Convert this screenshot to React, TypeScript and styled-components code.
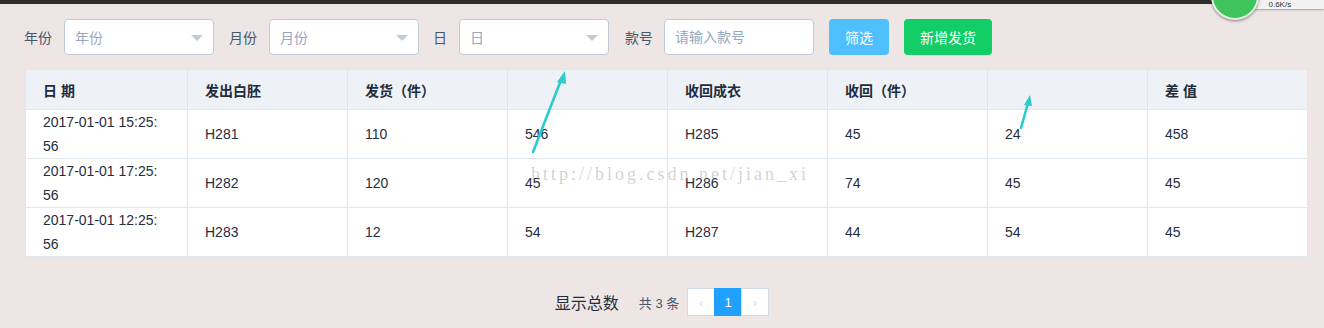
import React from 'react';
import styled, { createGlobalStyle } from 'styled-components';

const GlobalStyle = createGlobalStyle`
  html, body {
    margin: 0;
    padding: 0;
    background: #ede6e4;
    font-family: 'Liberation Sans', 'Noto Sans CJK SC', sans-serif;
    font-size: 14px;
    color: #1f2d3d;
  }
`;

const Page = styled.div`
  position: relative;
  width: 1324px;
  height: 328px;
  overflow: hidden;
  background: #ede6e4;
`;

const TopBar = styled.div`
  height: 4px;
  background: #2d2d2d;
`;

const FilterBar = styled.div`
  display: flex;
  align-items: center;
  padding: 15px 0 0 24px;
  height: 36px;
`;

const Field = styled.div<{ $after?: number }>`
  display: flex;
  align-items: center;
  margin-right: ${(p) => p.$after ?? 15}px;
`;

const Label = styled.span<{ $gap?: number }>`
  color: #48576a;
  margin-right: ${(p) => p.$gap ?? 12}px;
  white-space: nowrap;
`;

const SelectBox = styled.div`
  position: relative;
  box-sizing: border-box;
  width: 150px;
  height: 36px;
  border: 1px solid #bfcbd9;
  border-radius: 4px;
  background: #fff;
  display: flex;
  align-items: center;
  padding-left: 10px;
  color: #97a8be;
`;

const Caret = styled.span`
  position: absolute;
  right: 10px;
  top: 15px;
  width: 0;
  height: 0;
  border-left: 6px solid transparent;
  border-right: 6px solid transparent;
  border-top: 6px solid #bfcbd9;
`;

const TextInput = styled.input`
  box-sizing: border-box;
  width: 150px;
  height: 36px;
  border: 1px solid #bfcbd9;
  border-radius: 4px;
  background: #fff;
  padding: 0 10px;
  font: inherit;
  outline: none;
  &::placeholder {
    color: #97a8be;
  }
`;

const Button = styled.button<{ $color: string; $width: number }>`
  width: ${(p) => p.$width}px;
  height: 36px;
  border: none;
  border-radius: 4px;
  background: ${(p) => p.$color};
  color: #fff;
  font: inherit;
  padding: 0;
  margin-right: 15px;
`;

const TableWrap = styled.div`
  margin: 14px 16px 0 25px;
  border: 1px solid #dfe6ec;
  border-right: none;
  border-bottom: none;
  background: #fff;
`;

const Grid = styled.div`
  display: grid;
  grid-template-columns: 162px repeat(7, 160px);
`;

const HeadCell = styled.div`
  height: 39px;
  background: #eef1f6;
  border-right: 1px solid #dfe6ec;
  border-bottom: 1px solid #dfe6ec;
  padding-left: 17px;
  display: flex;
  align-items: center;
  font-weight: bold;
  color: #1f2d3d;
`;

const Cell = styled.div`
  height: 48px;
  border-right: 1px solid #dfe6ec;
  border-bottom: 1px solid #dfe6ec;
  padding-left: 17px;
  display: flex;
  align-items: center;
  line-height: 24px;
  color: #1f2d3d;
`;

const Footer = styled.div`
  display: flex;
  justify-content: center;
  align-items: center;
  margin-top: 31px;
  height: 28px;
`;

const TotalTitle = styled.span`
  font-size: 16px;
  color: #1f2d3d;
  margin-right: 20px;
`;

const TotalCount = styled.span`
  font-size: 13px;
  color: #48576a;
  margin-right: 9px;
`;

const PageBtn = styled.div<{ $active?: boolean }>`
  box-sizing: border-box;
  width: 28px;
  height: 28px;
  display: flex;
  align-items: center;
  justify-content: center;
  border: 1px solid ${(p) => (p.$active ? '#20a0ff' : '#d1dbe5')};
  margin-left: -1px;
  background: ${(p) => (p.$active ? '#20a0ff' : '#fff')};
  color: ${(p) => (p.$active ? '#fff' : '#d1dbe5')};
  font-size: 13px;
`;

const Overlay = styled.svg`
  position: absolute;
  left: 0;
  top: 0;
  pointer-events: none;
`;

const Watermark = styled.div`
  position: absolute;
  left: 531px;
  top: 164px;
  font-family: 'Liberation Serif', serif;
  font-size: 18px;
  letter-spacing: 3px;
  color: rgba(140, 140, 140, 0.4);
  white-space: nowrap;
`;

const TrayPanel = styled.div`
  position: absolute;
  right: 0;
  top: -6px;
  width: 78px;
  height: 15px;
  background: #f2f2f2;
  border-radius: 0 0 0 6px;
  box-shadow: 0 1px 2px rgba(0, 0, 0, 0.3);
  display: flex;
  align-items: flex-end;
  padding-left: 8px;
  box-sizing: border-box;
  font-size: 8px;
  color: #333;
  gap: 10px;
`;

const TrayArrow = styled.span`
  color: #3ec45a;
  font-size: 9px;
`;

const TrayBall = styled.div`
  position: absolute;
  left: 1211px;
  top: -28px;
  width: 44px;
  height: 44px;
  border-radius: 50%;
  background: #3ec45a;
  border: 2px solid #e8f0e8;
  box-shadow: 0 1px 3px rgba(0, 0, 0, 0.45);
`;

const headers = ['日 期', '发出白胚', '发货（件）', '', '收回成衣', '收回（件）', '', '差 值'];

const rows = [
  ['2017-01-01 15:25:|56', 'H281', '110', '546', 'H285', '45', '24', '458'],
  ['2017-01-01 17:25:|56', 'H282', '120', '45', 'H286', '74', '45', '45'],
  ['2017-01-01 12:25:|56', 'H283', '12', '54', 'H287', '44', '54', '45'],
];

const Select = ({ text }: { text: string }) => (
  <SelectBox>
    {text}
    <Caret />
  </SelectBox>
);

const CellText = ({ value }: { value: string }) => {
  if (!value.includes('|')) return <>{value}</>;
  const [a, b] = value.split('|');
  return (
    <div>
      {a}
      <br />
      {b}
    </div>
  );
};

export default function App() {
  return (
    <Page>
      <GlobalStyle />
      <TopBar />
      <FilterBar>
        <Field $after={15}>
          <Label>年份</Label>
          <Select text="年份" />
        </Field>
        <Field $after={14}>
          <Label>月份</Label>
          <Select text="月份" />
        </Field>
        <Field $after={16}>
          <Label>日</Label>
          <Select text="日" />
        </Field>
        <Field $after={15}>
          <Label $gap={11}>款号</Label>
          <TextInput placeholder="请输入款号" />
        </Field>
        <Button $color="#50bfff" $width={60}>筛选</Button>
        <Button $color="#13ce66" $width={88}>新增发货</Button>
      </FilterBar>

      <TableWrap>
        <Grid>
          {headers.map((h, i) => (
            <HeadCell key={i}>{h}</HeadCell>
          ))}
          {rows.map((r, ri) =>
            r.map((v, ci) => (
              <Cell key={`${ri}-${ci}`}>
                <CellText value={v} />
              </Cell>
            )),
          )}
        </Grid>
      </TableWrap>

      <Footer>
        <TotalTitle>显示总数</TotalTitle>
        <TotalCount>共 3 条</TotalCount>
        <PageBtn>‹</PageBtn>
        <PageBtn $active>1</PageBtn>
        <PageBtn>›</PageBtn>
      </Footer>

      <Watermark>http://blog.csdn.net/jian_xi</Watermark>

      <Overlay width="1324" height="328" viewBox="0 0 1324 328">
        <g stroke="#2ccbcc" strokeWidth="2.6" strokeLinecap="round" fill="#2ccbcc">
          <line x1="533" y1="152" x2="561" y2="80" />
          <polygon points="565,71 557,82 566,84" stroke="none" />
          <line x1="1021" y1="128" x2="1028" y2="103" />
          <polygon points="1030,95 1024,105 1032,106" stroke="none" />
        </g>
      </Overlay>

      <TrayPanel>
        <TrayArrow>↓</TrayArrow>
        <span>0.6K/s</span>
      </TrayPanel>
      <TrayBall />
    </Page>
  );
}
